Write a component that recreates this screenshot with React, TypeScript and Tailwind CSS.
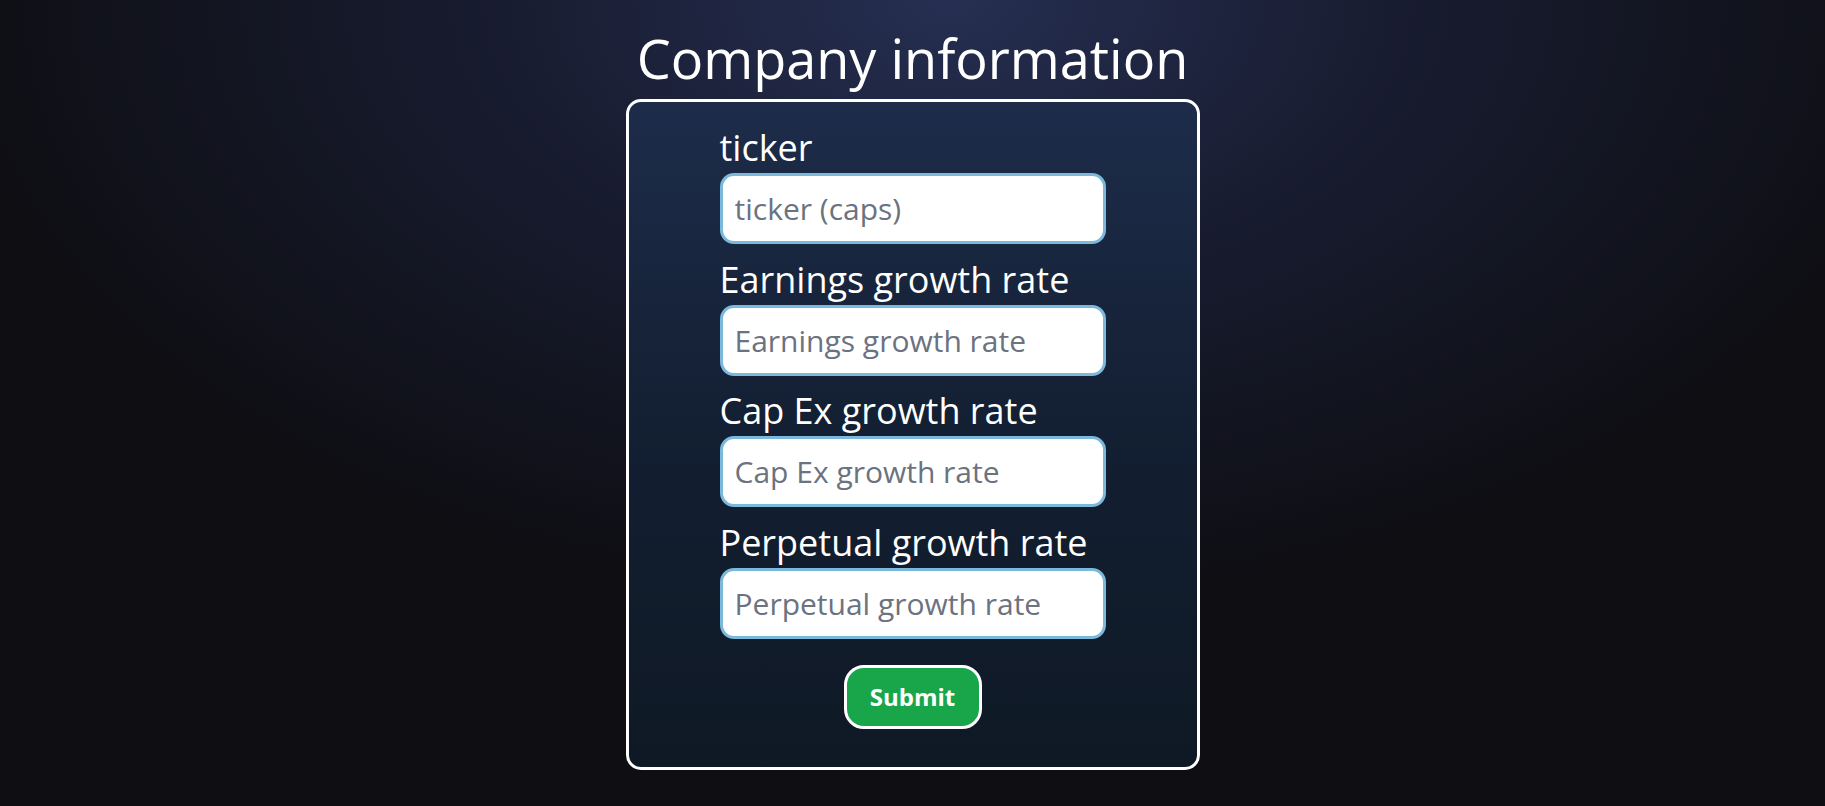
import { useState } from 'react'

const FIELDS = [
  { name: 'ticker', label: 'ticker', placeholder: 'ticker (caps)' },
  { name: 'earnings', label: 'Earnings growth rate', placeholder: 'Earnings growth rate' },
  { name: 'capex', label: 'Cap Ex growth rate', placeholder: 'Cap Ex growth rate' },
  { name: 'perpetual', label: 'Perpetual growth rate', placeholder: 'Perpetual growth rate' },
]

export default function App() {
  const [values, setValues] = useState<Record<string, string>>({})

  return (
    <div
      className="min-h-screen w-full flex flex-col items-center bg-[#0e0e13] bg-[radial-gradient(ellipse_55%_75%_at_52%_0%,#262f52_0%,#181c30_45%,#0e0e13_100%)] text-white"
      style={{ fontFamily: '"Open Sans", "Noto Sans", sans-serif' }}
    >
      <h1 className="mt-[21px] mb-[4px] text-[54px] leading-[normal] font-normal">Company information</h1>

      <form
        onSubmit={e => e.preventDefault()}
        className="w-[574px] border-[3px] border-white rounded-[15px] bg-gradient-to-b from-[#1d2c4a] via-[#131f32] to-[#0f1925] pt-[21px] pb-[38px] flex flex-col items-center"
      >
        <div className="w-[386px] flex flex-col gap-[10.5px]">
          {FIELDS.map(f => (
            <div key={f.name} className="flex flex-col gap-[1px]">
              <label htmlFor={f.name} className="text-[36px] leading-[normal]">{f.label}</label>
              <input
                id={f.name}
                value={values[f.name] || ''}
                onChange={e => setValues({ ...values, [f.name]: e.target.value })}
                placeholder={f.placeholder}
                className="h-[71px] w-full bg-white border-[3px] border-[#7ab8dc] rounded-[14px] px-[12px] text-[30px] text-gray-900 placeholder:text-[#6b7280] focus:outline-none"
              />
            </div>
          ))}
        </div>

        <button
          type="submit"
          className="mt-[26px] w-[138px] h-[64px] bg-[#19a64b] border-[3px] border-white rounded-[20px] text-[24px] font-bold text-white"
        >
          Submit
        </button>
      </form>
    </div>
  )
}
